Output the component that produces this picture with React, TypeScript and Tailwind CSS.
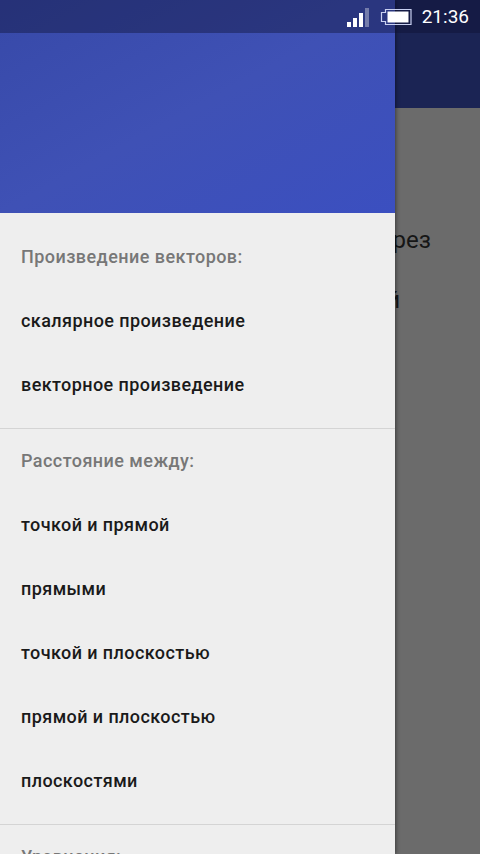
const groups = [
  {
    title: "Произведение векторов:",
    items: ["скалярное произведение", "векторное произведение"],
  },
  {
    title: "Расстояние между:",
    items: ["точкой и прямой", "прямыми", "точкой и плоскостью", "прямой и плоскостью", "плоскостями"],
  },
  { title: "Уравнения:", items: [] },
];

function StatusBar() {
  return (
    <div className="absolute left-0 top-0 z-20 flex h-[33px] w-full items-center justify-end bg-[#0c1030]/40 pr-[11px] text-white">
      <svg width="26" height="22" viewBox="0 0 26 22" className="mr-[8px]">
        <rect x="1" y="16" width="4" height="5" fill="#fff" />
        <rect x="7" y="12" width="4" height="9" fill="#fff" />
        <rect x="13" y="7" width="4" height="14" fill="#fff" />
        <rect x="19" y="2" width="4" height="19" fill="#fff" fillOpacity="0.35" />
      </svg>
      <svg width="32" height="18" viewBox="0 0 32 18" className="mr-[10px]">
        <path d="M5.5 1.5H31V16.5H5.5V13.5H1.5V4.5H5.5Z" fill="none" stroke="#c9d0f0" strokeWidth="1.2" />
        <rect x="7.5" y="3.5" width="21" height="11" fill="#fff" />
      </svg>
      <span className="font-['Roboto',sans-serif] text-[19px] leading-none">21:36</span>
    </div>
  );
}

function Drawer() {
  return (
    <aside className="absolute left-0 top-0 z-10 flex h-[854px] w-[395px] flex-col overflow-hidden bg-[#eeeeee] shadow-[1px_0_4px_rgba(0,0,0,0.45)]">
      <div className="h-[213px] shrink-0 bg-gradient-to-br from-[#3749a8] via-[#3f51b5] to-[#3b4fc0]" />
      <div className="pt-[12px]">
        {groups.map((group, i) => (
          <section key={group.title} className={i > 0 ? "mt-[11px] border-t border-[#d4d4d4]" : ""}>
            <div className="flex h-[64px] items-center pb-[2px] pl-[21px] text-[18px] font-medium tracking-[0.45px] text-[#777777]">
              {group.title}
            </div>
            {group.items.map((item) => (
              <div key={item} className="flex h-[64px] items-center pb-[2px] pl-[21px] text-[18px] font-medium tracking-[0.42px] text-[#1a1a1a]">
                {item}
              </div>
            ))}
          </section>
        ))}
      </div>
    </aside>
  );
}

export default function App() {
  return (
    <div className="relative h-[854px] w-[480px] overflow-hidden bg-[#6b6b6b] font-['Roboto',sans-serif]">
      <StatusBar />
      <Drawer />
      <div className="h-[108px] bg-[#1b2454]" />
      <div className="w-[431px] pt-[116px] text-right text-[24px] leading-[32px] text-[#161616]">через</div>
      <div className="w-[400px] pt-[28px] text-right text-[24px] leading-[32px] text-[#161616]">й</div>
    </div>
  );
}
